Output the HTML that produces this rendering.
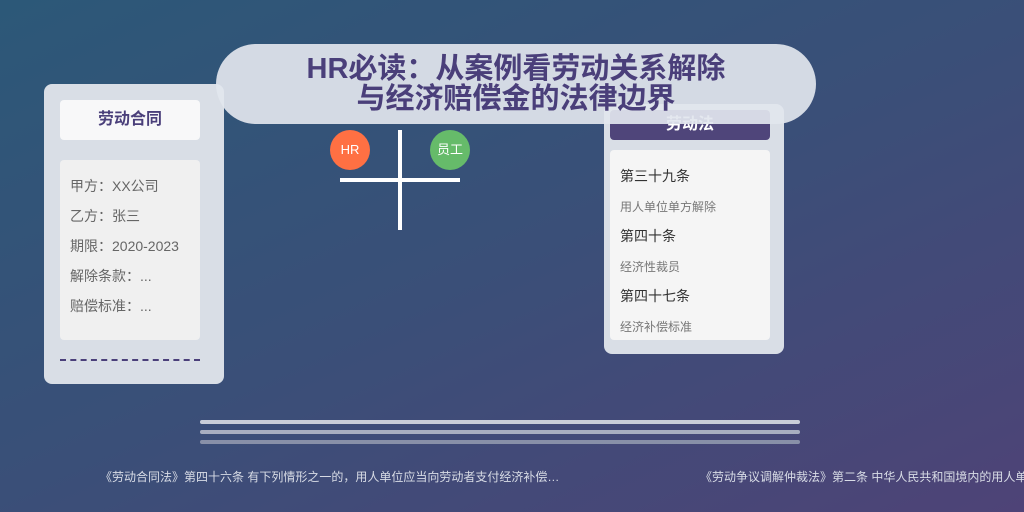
<!DOCTYPE html><html><head><meta charset="utf-8"><style>
*{margin:0;padding:0;box-sizing:border-box}
body{width:1024px;height:512px;overflow:hidden;position:relative;font-family:"Liberation Sans","Noto Sans CJK SC",sans-serif;background:linear-gradient(155deg,#2c5878 0%,#3a4f78 50%,#4e4377 100%)}
.a{position:absolute}
.card{background:#d9dee6;border-radius:8px}
.ln{font-size:14px;color:#666;position:absolute;left:10px}
</style></head><body>
<div class="a card" style="left:44px;top:84px;width:180px;height:300px"></div>
<div class="a" style="left:60px;top:100px;width:140px;height:40px;background:#f8f8f9;border-radius:4px;text-align:center;line-height:40px;font-size:16px;font-weight:bold;color:#4a3f7a">劳动合同</div>
<div class="a" style="left:60px;top:160px;width:140px;height:180px;background:#f0f0f0;border-radius:4px">
<div class="ln" style="top:16px">甲方：XX公司</div>
<div class="ln" style="top:46px">乙方：张三</div>
<div class="ln" style="top:76px">期限：2020-2023</div>
<div class="ln" style="top:106px">解除条款：...</div>
<div class="ln" style="top:136px">赔偿标准：...</div>
</div>
<div class="a" style="left:60px;top:359px;width:140px;border-top:2px dashed #4a3f7a"></div>
<div class="a card" style="left:604px;top:104px;width:180px;height:250px"></div>
<div class="a" style="left:610px;top:110px;width:160px;height:30px;background:#4f457a;border-radius:4px;text-align:center;line-height:30px;font-size:16px;font-weight:bold;color:#fff">劳动法</div>
<div class="a" style="left:610px;top:150px;width:160px;height:190px;background:#f5f5f5;border-radius:4px">
<div class="a" style="left:10px;top:16px;font-size:14px;color:#333">第三十九条</div>
<div class="a" style="left:10px;top:48px;font-size:12px;color:#777">用人单位单方解除</div>
<div class="a" style="left:10px;top:76px;font-size:14px;color:#333">第四十条</div>
<div class="a" style="left:10px;top:108px;font-size:12px;color:#777">经济性裁员</div>
<div class="a" style="left:10px;top:136px;font-size:14px;color:#333">第四十七条</div>
<div class="a" style="left:10px;top:168px;font-size:12px;color:#777">经济补偿标准</div>
</div>
<div class="a" style="left:216px;top:44px;width:600px;height:80px;border-radius:40px;background:rgba(226,230,238,0.92);text-align:center;padding-top:10px;font-size:29px;line-height:30px;font-weight:bold;color:#4a3f7a">HR必读：从案例看劳动关系解除<br>与经济赔偿金的法律边界</div>
<div class="a" style="left:330px;top:130px;width:40px;height:40px;border-radius:50%;background:#ff7043;color:#fff;font-size:13px;text-align:center;line-height:40px">HR</div>
<div class="a" style="left:430px;top:130px;width:40px;height:40px;border-radius:50%;background:#66bb6a;color:#fff;font-size:13px;text-align:center;line-height:40px">员工</div>
<div class="a" style="left:398px;top:130px;width:4px;height:100px;background:#fff"></div>
<div class="a" style="left:340px;top:178px;width:120px;height:4px;background:#fff"></div>
<div class="a" style="left:200px;top:420px;width:600px;height:4px;background:#c9cdd8;border-radius:2px"></div>
<div class="a" style="left:200px;top:430px;width:600px;height:4px;background:#a8aec0;border-radius:2px"></div>
<div class="a" style="left:200px;top:440px;width:600px;height:4px;background:#8890a8;border-radius:2px"></div>
<div class="a" style="left:100px;top:468px;font-size:12px;color:#d8dce6;white-space:nowrap">《劳动合同法》第四十六条 有下列情形之一的，用人单位应当向劳动者支付经济补偿…</div>
<div class="a" style="left:700px;top:468px;font-size:12px;color:#d8dce6;white-space:nowrap">《劳动争议调解仲裁法》第二条 中华人民共和国境内的用人单位</div>
</body></html>
